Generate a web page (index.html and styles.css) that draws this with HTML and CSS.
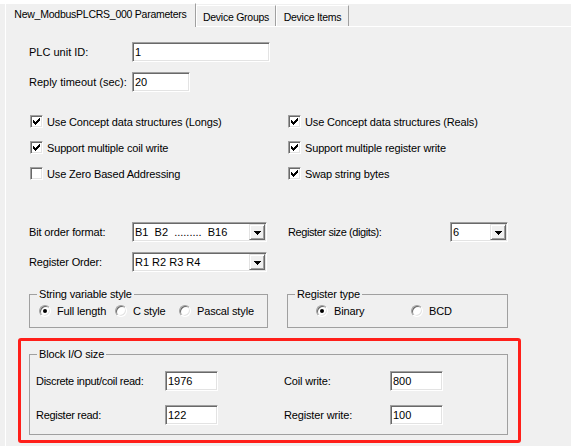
FILE: index.html
```html
<!DOCTYPE html>
<html>

<head>
    <title>New_ModbusPLCRS_000 Parameters</title>
    <meta charset='UTF-8'>
    <meta name='viewport' content='width=device-width, initial-scale=1.0'>
    <link rel="stylesheet" href="styles.css">
</head>

<body>
    <div class='tabs'>
        <div class='tab active'>New_ModbusPLCRS_000 Parameters</div>
        <div class='tab groups'>Device Groups</div>
        <div class='tab items'>Device Items</div>
    </div>
    <div class='page'>
        <div class='ids'>
            <div class='row'>
                <span class='lbl id-lbl'>PLC unit ID:</span>
                <span class='edit unit-id'>1</span>
            </div>
            <div class='row'>
                <span class='lbl id-lbl'>Reply timeout (sec):</span>
                <span class='edit timeout'>20</span>
            </div>
        </div>

        <div class='checks'>
            <div class='chk'><span class='box on'><svg width='11' height='11' viewBox='0 0 11 11'><path d='M8 2h1v1h-1zM7 3h2v1h-2zM2 4h1v1h-1zM6 4h3v1h-3zM2 5h2v1h-2zM5 5h3v1h-3zM2 6h5v1h-5zM3 7h3v1h-3zM4 8h1v1h-1z' /></svg></span>Use Concept data structures (Longs)</div>
            <div class='chk'><span class='box on'><svg width='11' height='11' viewBox='0 0 11 11'><path d='M8 2h1v1h-1zM7 3h2v1h-2zM2 4h1v1h-1zM6 4h3v1h-3zM2 5h2v1h-2zM5 5h3v1h-3zM2 6h5v1h-5zM3 7h3v1h-3zM4 8h1v1h-1z' /></svg></span>Use Concept data structures (Reals)</div>
            <div class='chk'><span class='box on'><svg width='11' height='11' viewBox='0 0 11 11'><path d='M8 2h1v1h-1zM7 3h2v1h-2zM2 4h1v1h-1zM6 4h3v1h-3zM2 5h2v1h-2zM5 5h3v1h-3zM2 6h5v1h-5zM3 7h3v1h-3zM4 8h1v1h-1z' /></svg></span>Support multiple coil write</div>
            <div class='chk'><span class='box on'><svg width='11' height='11' viewBox='0 0 11 11'><path d='M8 2h1v1h-1zM7 3h2v1h-2zM2 4h1v1h-1zM6 4h3v1h-3zM2 5h2v1h-2zM5 5h3v1h-3zM2 6h5v1h-5zM3 7h3v1h-3zM4 8h1v1h-1z' /></svg></span>Support multiple register write</div>
            <div class='chk'><span class='box'></span>Use Zero Based Addressing</div>
            <div class='chk'><span class='box on'><svg width='11' height='11' viewBox='0 0 11 11'><path d='M8 2h1v1h-1zM7 3h2v1h-2zM2 4h1v1h-1zM6 4h3v1h-3zM2 5h2v1h-2zM5 5h3v1h-3zM2 6h5v1h-5zM3 7h3v1h-3zM4 8h1v1h-1z' /></svg></span>Swap string bytes</div>
        </div>

        <div class='formats'>
            <div class='row'>
                <span class='lbl fmt-lbl'>Bit order format:</span>
                <span class='combo wide'><span class='val'>B1  B2  .........  B16</span><span class='drop'><svg width='7' height='4' viewBox='0 0 7 4'><path d='M0 0h7v1h-7zM1 1h5v1h-5zM2 2h3v1h-3zM3 3h1v1h-1z' /></svg></span></span>
                <span class='lbl size-lbl'>Register size (digits):</span>
                <span class='combo narrow'><span class='val'>6</span><span class='drop'><svg width='7' height='4' viewBox='0 0 7 4'><path d='M0 0h7v1h-7zM1 1h5v1h-5zM2 2h3v1h-3zM3 3h1v1h-1z' /></svg></span></span>
            </div>
            <div class='row'>
                <span class='lbl fmt-lbl'>Register Order:</span>
                <span class='combo wide'><span class='val'>R1 R2 R3 R4</span><span class='drop'><svg width='7' height='4' viewBox='0 0 7 4'><path d='M0 0h7v1h-7zM1 1h5v1h-5zM2 2h3v1h-3zM3 3h1v1h-1z' /></svg></span></span>
            </div>
        </div>

        <div class='groups-row'>
            <fieldset class='group string-style'>
                <legend>String variable style</legend>
                <div class='radios'>
                    <span class='opt full'><span class='radio on'></span>Full length</span>
                    <span class='opt cstyle'><span class='radio'></span>C style</span>
                    <span class='opt'><span class='radio'></span>Pascal style</span>
                </div>
            </fieldset>
            <fieldset class='group reg-type'>
                <legend>Register type</legend>
                <div class='radios'>
                    <span class='opt binary'><span class='radio on'></span>Binary</span>
                    <span class='opt'><span class='radio'></span>BCD</span>
                </div>
            </fieldset>
        </div>

        <div class='highlight'>
            <fieldset class='group block-io'>
                <legend>Block I/O size</legend>
                <div class='io'>
                    <div class='row'>
                        <span class='lbl io-lbl'>Discrete input/coil read:</span>
                        <span class='edit io-edit'>1976</span>
                        <span class='lbl io-lbl2'>Coil write:</span>
                        <span class='edit io-edit'>800</span>
                    </div>
                    <div class='row'>
                        <span class='lbl io-lbl'>Register read:</span>
                        <span class='edit io-edit'>122</span>
                        <span class='lbl io-lbl2'>Register write:</span>
                        <span class='edit io-edit'>100</span>
                    </div>
                </div>
            </fieldset>
        </div>
    </div>
</body>

</html>
```

FILE: styles.css
```css
* {
    box-sizing: border-box;
}

body {
    margin: 0;
    background-color: #f0f0f0;
    font-family: "Liberation Sans", Arial, sans-serif;
    font-size: 11px;
    letter-spacing: -0.15px;
    color: #000;
}

/* tab strip */
.tabs {
    display: flex;
    align-items: flex-end;
    height: 26px;
    padding-left: 5px;
    background: linear-gradient(#fff 0 4px, #f0f0f0 4px);
}

.tab {
    height: 21px;
    padding-top: 3px;
    line-height: 17px;
    text-align: center;
    font-size: 10.5px;
    letter-spacing: -0.25px;
    border-top: 1px solid #fff;
    border-left: 1px solid #fff;
    border-right: 1px solid #a0a0a0;
    background-color: #f0f0f0;
}

.tab.active {
    position: relative;
    z-index: 1;
    width: 191px;
    height: 24px;
    margin-bottom: -1px;
    padding-top: 2px;
}

.tab.groups {
    width: 80px;
}

.tab.items {
    width: 73px;
}

.page {
    margin-left: 5px;
    border-top: 1px solid #fff;
    border-left: 1px solid #fff;
    padding-top: 15px;
    height: 420px;
}

.row {
    display: flex;
    align-items: center;
    height: 20px;
}

.row+.row {
    margin-top: 10px;
}

.lbl {
    flex: none;
    white-space: nowrap;
}

/* sunken 3d controls */
.edit,
.combo,
.box,
.radio {
    background-color: #fff;
    border: 1px solid;
    border-color: #a0a0a0 #fff #fff #a0a0a0;
    box-shadow: inset 1px 1px #696969, inset -1px -1px #e3e3e3;
}

.edit {
    height: 20px;
    padding-left: 2px;
    line-height: 18px;
    letter-spacing: 0;
}

.ids {
    padding-left: 23px;
}

.id-lbl {
    width: 103px;
    letter-spacing: 0;
}

.unit-id {
    width: 138px;
}

.timeout {
    width: 58px;
}

/* check boxes */
.checks {
    display: grid;
    grid-template-columns: 258px 1fr;
    row-gap: 13px;
    margin-top: 23px;
    padding-left: 24px;
}

.chk {
    display: flex;
    align-items: center;
    height: 13px;
    white-space: nowrap;
}

.box {
    flex: none;
    width: 13px;
    height: 13px;
    margin-right: 4px;
}

.box svg {
    display: block;
}

/* combos */
.formats {
    margin-top: 42px;
    padding-left: 23px;
}

.fmt-lbl {
    width: 103px;
}

.size-lbl {
    width: 162px;
    margin-left: 21px;
    letter-spacing: -0.4px;
}

.combo {
    display: flex;
    height: 20px;
    padding: 1px;
}

.combo.wide {
    width: 135px;
}

.combo.narrow {
    width: 58px;
}

.val {
    flex: 1;
    padding-left: 1px;
    line-height: 16px;
    white-space: pre;
    letter-spacing: 0;
}

.drop {
    display: flex;
    align-items: center;
    justify-content: center;
    width: 16px;
    height: 16px;
    background-color: #f0f0f0;
    border: 1px solid;
    border-color: #e3e3e3 #696969 #696969 #e3e3e3;
    box-shadow: inset 1px 1px #fff, inset -1px -1px #a0a0a0;
}

.drop svg {
    display: block;
    margin-top: 1px;
}

/* group boxes */
.groups-row {
    display: flex;
    margin-top: 16px;
    padding-left: 23px;
}

.group {
    margin: 0;
    padding: 0;
    min-width: 0;
    border: 1px solid #a0a0a0;
}

.group legend {
    margin-left: 7px;
    padding: 0 2px;
    line-height: 13px;
}

.string-style {
    width: 239px;
}

.reg-type {
    width: 221px;
    margin-left: 19px;
}

.radios {
    display: flex;
    height: 26px;
    padding: 3px 0 10px 9px;
}

.reg-type .radios {
    padding-left: 28px;
}

.opt {
    display: flex;
    align-items: center;
    height: 13px;
    white-space: nowrap;
}

.opt.full {
    width: 76px;
}

.opt.cstyle {
    width: 64px;
}

.opt.binary {
    width: 95px;
}

.radio {
    position: relative;
    flex: none;
    width: 12px;
    height: 12px;
    margin-right: 6px;
    border-radius: 50%;
}

.radio.on::after {
    content: "";
    position: absolute;
    left: 3px;
    top: 3px;
    width: 4px;
    height: 4px;
    border-radius: 50%;
    background-color: #000;
}

/* red marker around block i/o */
.highlight {
    width: 503px;
    margin: 10px 0 0 12px;
    padding: 7px 10px 5px 8px;
    border: 3px solid #ff1f1a;
    border-radius: 3px;
}

.block-io {
    width: 100%;
}

.io {
    padding: 10px 0 9px 6px;
}

.io .row+.row {
    margin-top: 14px;
}

.io-lbl {
    width: 129px;
    letter-spacing: -0.3px;
}

.io-lbl2 {
    width: 106px;
    margin-left: 66px;
}

.io-edit {
    width: 53px;
}
```
